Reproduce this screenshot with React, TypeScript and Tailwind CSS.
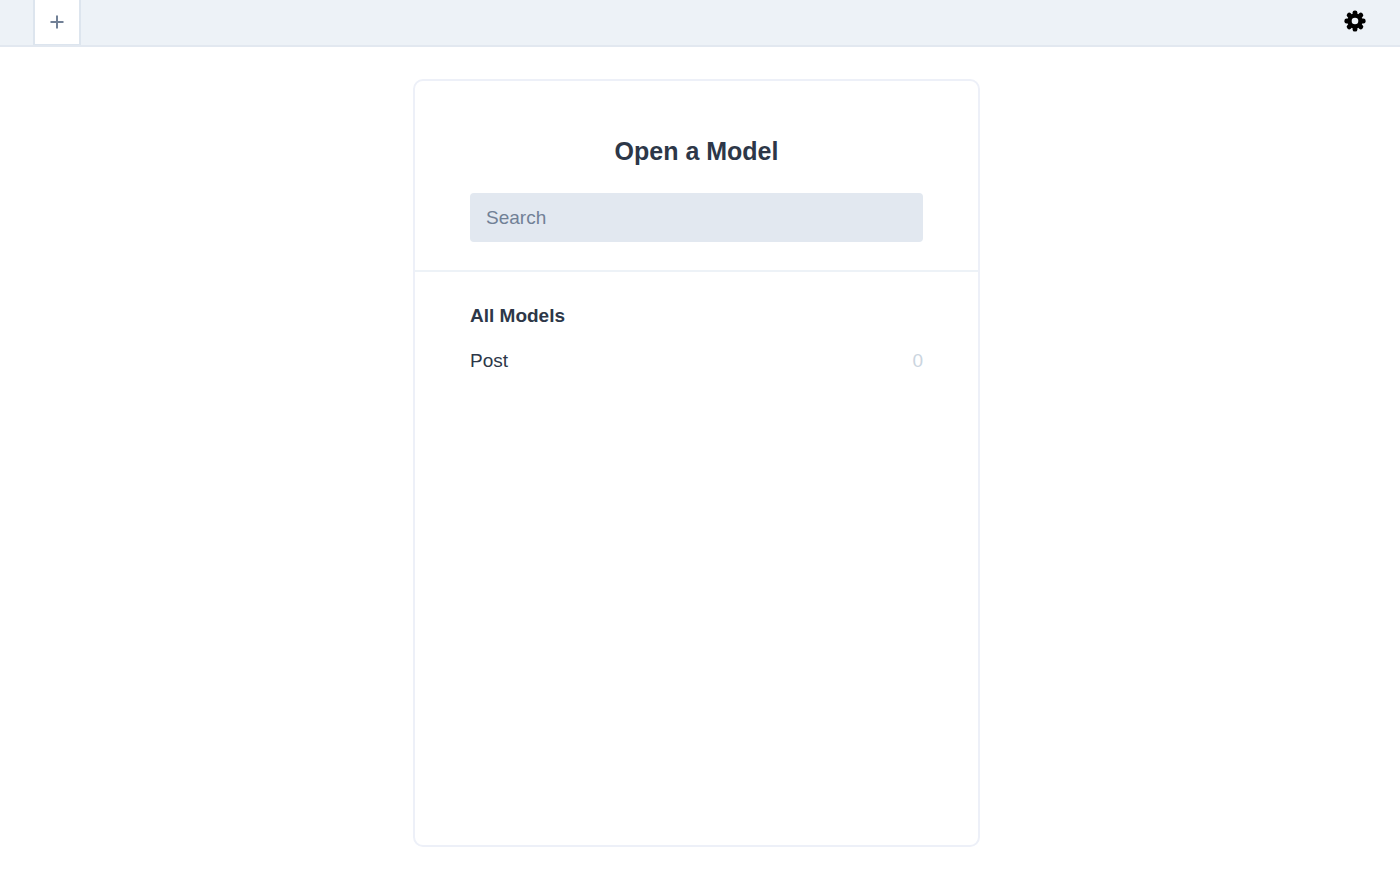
const teeth = [0, 45, 90, 135, 180, 225, 270, 315];

function Gear() {
  return (
    <svg width="22" height="22" viewBox="0 0 22 22" className="text-black">
      <circle cx="11" cy="11" r="7.6" fill="currentColor" />
      {teeth.map((a) => (
        <rect key={a} x="8.6" y="0.4" width="4.8" height="6" rx="2.2" fill="currentColor" transform={`rotate(${a} 11 11)`} />
      ))}
      <circle cx="11" cy="11" r="3.3" fill="#edf2f7" />
    </svg>
  );
}

export default function App() {
  return (
    <div className="min-h-[871px] bg-white font-['Liberation_Sans',Arial,sans-serif]">
      {/* top bar */}
      <header className="flex h-[47px] items-start justify-between border-b-2 border-[#e2e8f0] bg-[#edf2f7]">
        <div className="pl-[33px]">
          <button className="flex h-[45px] w-[48px] items-center justify-center border-x-2 border-b border-[#dde5ee] bg-white">
            <svg width="14" height="14" viewBox="0 0 14 14" className="stroke-[#718096]" strokeWidth="2">
              <path d="M7 0.5v13M0.5 7h13" fill="none" />
            </svg>
          </button>
        </div>
        <div className="pt-[10px] pr-[34px]">
          <Gear />
        </div>
      </header>

      {/* model picker */}
      <main className="flex justify-center pt-[32px] pr-[7px]">
        <section className="h-[768px] w-[567px] rounded-[10px] border-2 border-[#edf0f8] bg-white">
          <div className="border-b-2 border-[#edf2f7] px-[55px] pt-[54px] pb-[28px]">
            <h1 className="text-center text-[25px] leading-[32px] font-bold text-[#2d3748]">
              Open a Model
            </h1>
            <input
              placeholder="Search"
              className="mt-[26px] block h-[49px] w-full rounded bg-[#e2e8f0] px-4 text-[19px] text-[#2d3748] outline-none placeholder:text-[#718096]"
            />
          </div>
          <div className="px-[55px] pt-[31px]">
            <h2 className="text-[19px] leading-[26px] font-bold text-[#2d3748]">All Models</h2>
            <div className="mt-[19px] flex items-center justify-between text-[19px] leading-[26px]">
              <span className="text-[#2d3748]">Post</span>
              <span className="text-[#cbd5e0]">0</span>
            </div>
          </div>
        </section>
      </main>
    </div>
  );
}
